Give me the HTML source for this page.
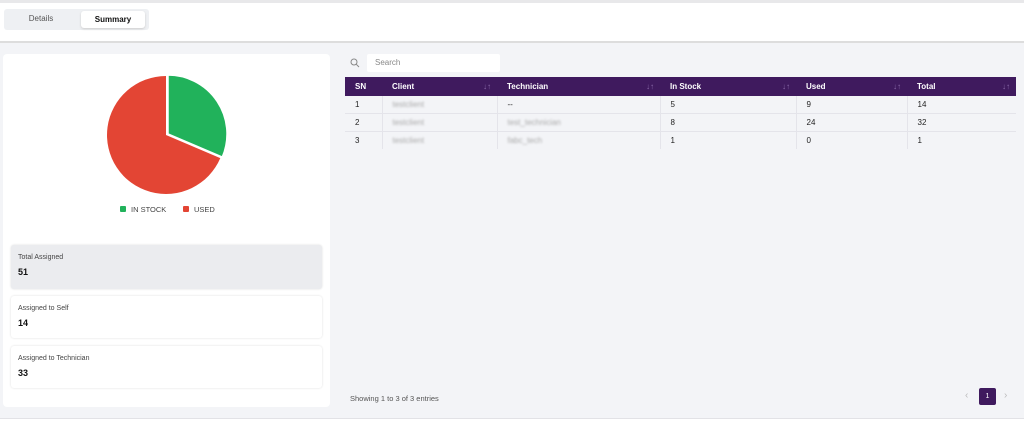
<!DOCTYPE html><html><head><style>
body{margin:0;width:1024px;height:433px;background:#fff;font-family:"Liberation Sans",sans-serif;position:relative;overflow:hidden;font-size:8px;color:#222}
.a{position:absolute}
td,th{padding:0 0 0 10px;text-align:left;height:17px}
table{border-collapse:collapse}
th{color:#fff;font-weight:bold;height:19px;font-size:8px;position:relative}
th span{position:absolute;right:6px;color:#8a6aa8;font-weight:normal}
td{border-bottom:1px solid #e4e4ea;border-right:1px solid #e4e4ea;font-size:8px}
.blur{color:#aaa;filter:blur(1px)}
.card{position:absolute;left:11px;width:311px;height:42px;background:#fff;border-radius:3px;box-shadow:0 0 2px #ddd}
.card .t{position:absolute;left:7px;top:9px;font-size:7px;color:#444}
.card .v{position:absolute;left:7px;top:22px;font-size:9px;font-weight:bold;color:#111}
</style></head><body>
<div class="a" style="left:0;top:0;width:1024px;height:3px;background:#e8e8ea"></div>
<div class="a" style="left:4px;top:9px;width:145px;height:21px;background:#eef0f3;border-radius:3px"></div>
<div class="a" style="left:4px;top:9px;width:74px;height:21px;text-align:center;line-height:20px;color:#555">Details</div>
<div class="a" style="left:81px;top:11px;width:64px;height:17px;background:#fff;border-radius:3px;box-shadow:0 1px 2px #ccc;text-align:center;line-height:17px;font-weight:bold;color:#111">Summary</div>
<div class="a" style="left:0;top:41px;width:1024px;height:2px;background:#ddd"></div>
<div class="a" style="left:0;top:43px;width:1024px;height:376px;background:#f3f4f7"></div>
<div class="a" style="left:0;top:418px;width:1024px;height:1px;background:#e2e2e6"></div>
<div class="a" style="left:3px;top:54px;width:327px;height:353px;background:#fff;border-radius:4px"></div>
<svg class="a" style="left:100px;top:70px" width="134" height="134" viewBox="0 0 134 134">
<path d="M66 65 L120.3 88.1 A59 59 0 1 1 66 6 Z" fill="#e34534"/>
<path d="M66 65 L66 6 A59 59 0 0 1 120.3 88.1 Z" fill="#21b25b" transform="translate(2,-1)" stroke="#fff" stroke-width="1.5"/>
</svg>
<div class="a" style="left:120px;top:206px;width:6px;height:6px;background:#21b25b;border-radius:1px"></div>
<div class="a" style="left:131px;top:205px;font-size:7.5px;color:#444">IN STOCK</div>
<div class="a" style="left:183px;top:206px;width:6px;height:6px;background:#e34534;border-radius:1px"></div>
<div class="a" style="left:194px;top:205px;font-size:7.5px;color:#444">USED</div>
<div class="card" style="top:245px;height:44px;background:#ebecef"><div class="t">Total Assigned</div><div class="v">51</div></div>
<div class="card" style="top:296px"><div class="t">Assigned to Self</div><div class="v">14</div></div>
<div class="card" style="top:346px"><div class="t">Assigned to Technician</div><div class="v">33</div></div>
<svg class="a" style="left:350px;top:58px" width="10" height="10" viewBox="0 0 10 10"><circle cx="4" cy="4" r="3" fill="none" stroke="#888" stroke-width="1"/><path d="M6.3 6.3L9 9" stroke="#888"/></svg>
<div class="a" style="left:367px;top:54px;width:133px;height:18px;background:#fff;border-radius:2px;color:#888;line-height:18px;padding-left:8px;box-sizing:border-box">Search</div>
<table class="a" style="left:345px;top:77px;width:671px">
<tr style="background:#3f1a5e"><th style="width:27px">SN</th><th style="width:105px">Client<span>↓↑</span></th><th style="width:153px">Technician<span>↓↑</span></th><th style="width:126px">In Stock<span>↓↑</span></th><th style="width:101px">Used<span>↓↑</span></th><th>Total<span>↓↑</span></th></tr>
<tr><td>1</td><td class="blur">testclient</td><td>--</td><td>5</td><td>9</td><td style="border-right:0">14</td></tr>
<tr><td>2</td><td class="blur">testclient</td><td class="blur">test_technician</td><td>8</td><td>24</td><td style="border-right:0">32</td></tr>
<tr><td style="border-bottom:0">3</td><td class="blur" style="border-bottom:0">testclient</td><td class="blur" style="border-bottom:0">fabc_tech</td><td style="border-bottom:0">1</td><td style="border-bottom:0">0</td><td style="border:0">1</td></tr>
</table>
<div class="a" style="left:350px;top:394px;font-size:7.5px;color:#555">Showing 1 to 3 of 3 entries</div>
<div class="a" style="left:965px;top:390px;color:#bbb;font-size:10px">‹</div>
<div class="a" style="left:979px;top:388px;width:17px;height:17px;background:#3f1a5e;border-radius:2px;color:#fff;text-align:center;line-height:17px;font-size:7px">1</div>
<div class="a" style="left:1004px;top:390px;color:#bbb;font-size:10px">›</div>
</body></html>
